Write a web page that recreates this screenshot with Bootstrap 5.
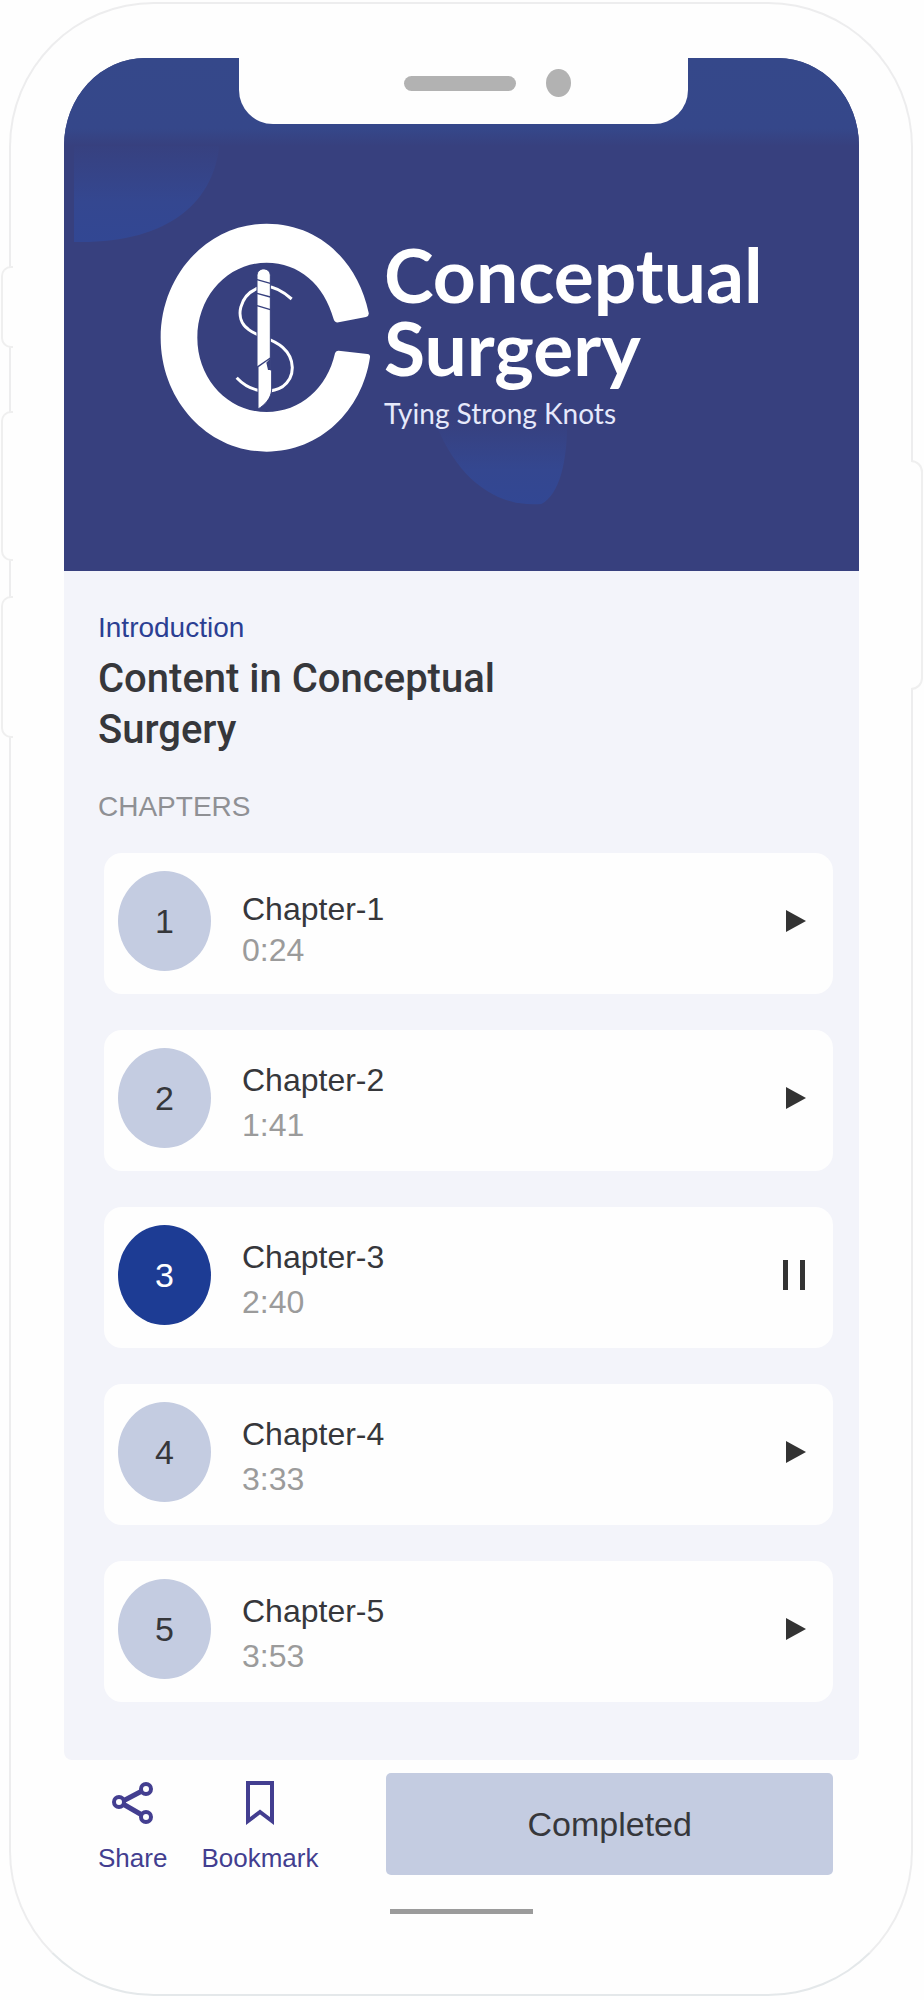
<!DOCTYPE html>
<html lang="en">
<head>
<meta charset="utf-8">
<meta name="viewport" content="width=device-width, initial-scale=1">
<title>Conceptual Surgery</title>
<link href="https://cdn.jsdelivr.net/npm/bootstrap@5.3.0/dist/css/bootstrap.min.css" rel="stylesheet">
<style>
  body { background: #fefefe; color: #36373b; font-family: "Liberation Sans", Arial, sans-serif; }
  .phone { margin: 2px 11px 0 9px; padding: 54px 52px 80px 53px; border: 2px solid #ededee; border-bottom-color: #e4e8ea; border-radius: 145px; background: #fefefe; }
  .side-key { position: absolute; left: -10px; width: 12px; border: 2px solid #efefef; border-right: 0; border-radius: 10px 0 0 10px; background: #fefefe; }
  .key-mute { top: 262px; height: 82px; }
  .key-up { top: 407px; height: 150px; }
  .key-down { top: 592px; height: 142px; }
  .key-power { top: 456px; height: 230px; left: auto; right: -12px; border: 2px solid #efefef; border-left: 0; border-radius: 0 12px 12px 0; }
  .notch { top: 0; left: 22%; width: calc(57% - 4px); height: 66px; padding-bottom: 16px; background: #fefefe; border-radius: 0 0 34px 34px; }
  .speaker { width: 112px; height: 15px; border-radius: 8px; background: #b2b2b2; }
  .camera { width: 25px; height: 28px; margin-left: 30px; background: #b2b2b2; }
  .hero { background: #37407e; height: 513px; padding: 164px 0 0 96px; border-radius: 81px 81px 0 0 / 88px 88px 0 0; }
  .brand { font-family: Lato, sans-serif; color: #fff; margin: 16px 0 0 12px; }
  .brand-name { font-size: 75px; line-height: 73px; font-weight: 700; }
  .brand-line { font-size: 28px; line-height: 36px; margin-top: 11px; color: #e6e9fb; }
  .lesson { background: #f3f4fa; padding: 40px 26px 58px 34px; border-radius: 0 0 8px 8px; }
  .eyebrow { font-size: 28px; line-height: 34px; color: #2b3f93; }
  .lesson-title { font-family: Roboto, sans-serif; font-size: 40px; line-height: 51px; font-weight: 500; max-width: 460px; margin: 8px 0 35px; }
  .section-name { font-size: 28px; line-height: 34px; font-weight: 400; color: #8f9094; margin: 0 0 29px; }
  .chapters { gap: 36px; margin-left: 6px; }
  .chapter { background: #fefefe; border-radius: 18px; padding: 18px 14px 23px; }
  .num { flex: none; width: 93px; height: 100px; background: #c4cce1; font-size: 34px; line-height: 40px; }
  .num.current { background: #1d3c94; color: #fff; }
  .info { margin-left: 31px; padding-top: 10px; font-size: 32px; line-height: 45px; }
  .first .info { padding-top: 18px; line-height: 41px; }
  .time { color: #9b9b9b; }
  .play { background: none; border: 0; padding: 12px 13px 12px 12px; color: #333; line-height: 0; }
  .actions { padding: 13px 26px 0 34px; gap: 68px; }
  .tools { gap: 34px; }
  .act { background: none; border: 0; padding: 8px 0 0; color: #433e90; font-size: 26px; line-height: 32px; gap: 17px; }
  .done { background: #c4cce1; color: #36373b; font-size: 34px; border-radius: 5px; height: 102px; }
  .done:hover { background: #b6c0da; }
  .home-bar { width: 143px; height: 5px; background: #9b9b9b; margin-top: 34px; }
</style>
</head>
<body>
<div class="phone position-relative">
  <span class="side-key key-mute"></span>
  <span class="side-key key-up"></span>
  <span class="side-key key-down"></span>
  <span class="side-key key-power"></span>

  <header class="hero position-relative overflow-hidden d-flex align-items-start">
    <svg class="position-absolute top-0 start-0 w-100 h-100" viewBox="0 0 796 513" preserveAspectRatio="none" aria-hidden="true">
      <defs>
        <linearGradient id="band" x1="0" y1="0" x2="0" y2="1"><stop offset="0" stop-color="#35488a"/><stop offset=".8" stop-color="#35478a"/><stop offset="1" stop-color="#37407e"/></linearGradient>
        <linearGradient id="glow" x1="0" y1="0" x2="0" y2="1"><stop offset="0" stop-color="#37407e"/><stop offset=".6" stop-color="#344790"/><stop offset="1" stop-color="#324793"/></linearGradient>
      </defs>
      <path d="M10 82H156C152 146 102 186 10 184Z" fill="url(#glow)"/>
      <path d="M370 360H504C504 405 496 436 478 446C432 450 392 420 370 360Z" fill="url(#glow)"/>
      <rect width="796" height="88" fill="url(#band)"/>
    </svg>
    <div class="notch position-absolute d-flex align-items-center justify-content-center">
      <span class="speaker ms-5"></span><span class="camera rounded-circle"></span>
    </div>
    <svg class="position-relative flex-shrink-0" width="212" height="232" viewBox="30 36 636 696" role="img" aria-label="Conceptual Surgery logo">
      <path fill="#fff" d="M656 308C622 150 505 41 350 41C174 41 32 194 32 383C32 572 174 725 350 725C510 725 636 603 660 442Q661 433 652 432L566 422Q557 421 555 430C532 534 452 606 350 606C234 606 142 507 142 383C142 258 234 158 350 158C446 158 523 223 551 328Q554 339 566 337L648 321Q658 318 656 308Z"/>
      <path fill="none" stroke="#fff" stroke-width="9" d="M425 267C385 232 350 224 325 234C270 255 250 325 295 358C325 382 365 382 398 412C435 445 438 500 398 530C350 558 295 540 260 503"/>
      <path fill="#fff" stroke="#37407e" stroke-width="3" d="M321 197C321 170 361 170 361 197V480H365V540C363 565 345 585 324 597V470H321Z"/>
      <path fill="none" stroke="#37407e" stroke-width="4" d="M321 209L361 220M321 250L361 261M321 287L361 299M324 470L361 444"/>
      <path fill="#37407e" d="M349 458L362 444V480H354Z"/>
    </svg>
    <div class="brand position-relative text-nowrap">
      <div class="brand-name">Conceptual<br>Surgery</div>
      <div class="brand-line">Tying Strong Knots</div>
    </div>
  </header>

  <main class="lesson">
    <div class="eyebrow">Introduction</div>
    <h1 class="lesson-title">Content in Conceptual Surgery</h1>
    <h2 class="section-name">CHAPTERS</h2>
    <ol class="chapters list-unstyled d-flex flex-column mb-0">
      <li class="chapter first d-flex align-items-center">
        <span class="num rounded-circle d-flex align-items-center justify-content-center">1</span>
        <div class="info flex-grow-1"><div>Chapter-1</div><div class="time">0:24</div></div>
        <button class="play" type="button" aria-label="Play Chapter-1"><svg width="20" height="22" viewBox="0 0 20 22"><path d="M0 0L20 11L0 22Z" fill="currentColor"/></svg></button>
      </li>
      <li class="chapter d-flex align-items-center">
        <span class="num rounded-circle d-flex align-items-center justify-content-center">2</span>
        <div class="info flex-grow-1"><div>Chapter-2</div><div class="time">1:41</div></div>
        <button class="play" type="button" aria-label="Play Chapter-2"><svg width="20" height="22" viewBox="0 0 20 22"><path d="M0 0L20 11L0 22Z" fill="currentColor"/></svg></button>
      </li>
      <li class="chapter d-flex align-items-center">
        <span class="num current rounded-circle d-flex align-items-center justify-content-center">3</span>
        <div class="info flex-grow-1"><div>Chapter-3</div><div class="time">2:40</div></div>
        <button class="play" type="button" aria-label="Pause Chapter-3"><svg width="23" height="30" viewBox="0 0 23 30"><path d="M0 0H5V30H0ZM17 0H22V30H17Z" fill="currentColor"/></svg></button>
      </li>
      <li class="chapter d-flex align-items-center">
        <span class="num rounded-circle d-flex align-items-center justify-content-center">4</span>
        <div class="info flex-grow-1"><div>Chapter-4</div><div class="time">3:33</div></div>
        <button class="play" type="button" aria-label="Play Chapter-4"><svg width="20" height="22" viewBox="0 0 20 22"><path d="M0 0L20 11L0 22Z" fill="currentColor"/></svg></button>
      </li>
      <li class="chapter d-flex align-items-center">
        <span class="num rounded-circle d-flex align-items-center justify-content-center">5</span>
        <div class="info flex-grow-1"><div>Chapter-5</div><div class="time">3:53</div></div>
        <button class="play" type="button" aria-label="Play Chapter-5"><svg width="20" height="22" viewBox="0 0 20 22"><path d="M0 0L20 11L0 22Z" fill="currentColor"/></svg></button>
      </li>
    </ol>
  </main>

  <footer>
    <div class="actions d-flex align-items-start">
      <div class="tools d-flex">
        <button class="act d-flex flex-column align-items-center" type="button">
          <svg width="42" height="44" viewBox="0 0 42 44" fill="none" stroke="currentColor" stroke-width="4"><path stroke-width="5" d="M11 20L30 10M11 23L30 34"/><circle cx="7" cy="21" r="5"/><circle cx="34" cy="8" r="5"/><circle cx="34" cy="36" r="5"/></svg>
          <span>Share</span>
        </button>
        <button class="act d-flex flex-column align-items-center" type="button">
          <svg width="30" height="44" viewBox="0 0 30 44" fill="none" stroke="currentColor" stroke-width="4"><path d="M3 2H27V40L15 31L3 40Z"/></svg>
          <span>Bookmark</span>
        </button>
      </div>
      <button class="btn done flex-grow-1" type="button">Completed</button>
    </div>
    <div class="home-bar mx-auto"></div>
  </footer>
</div>
<script src="https://cdn.jsdelivr.net/npm/bootstrap@5.3.0/dist/js/bootstrap.bundle.min.js"></script>
</body>
</html>
